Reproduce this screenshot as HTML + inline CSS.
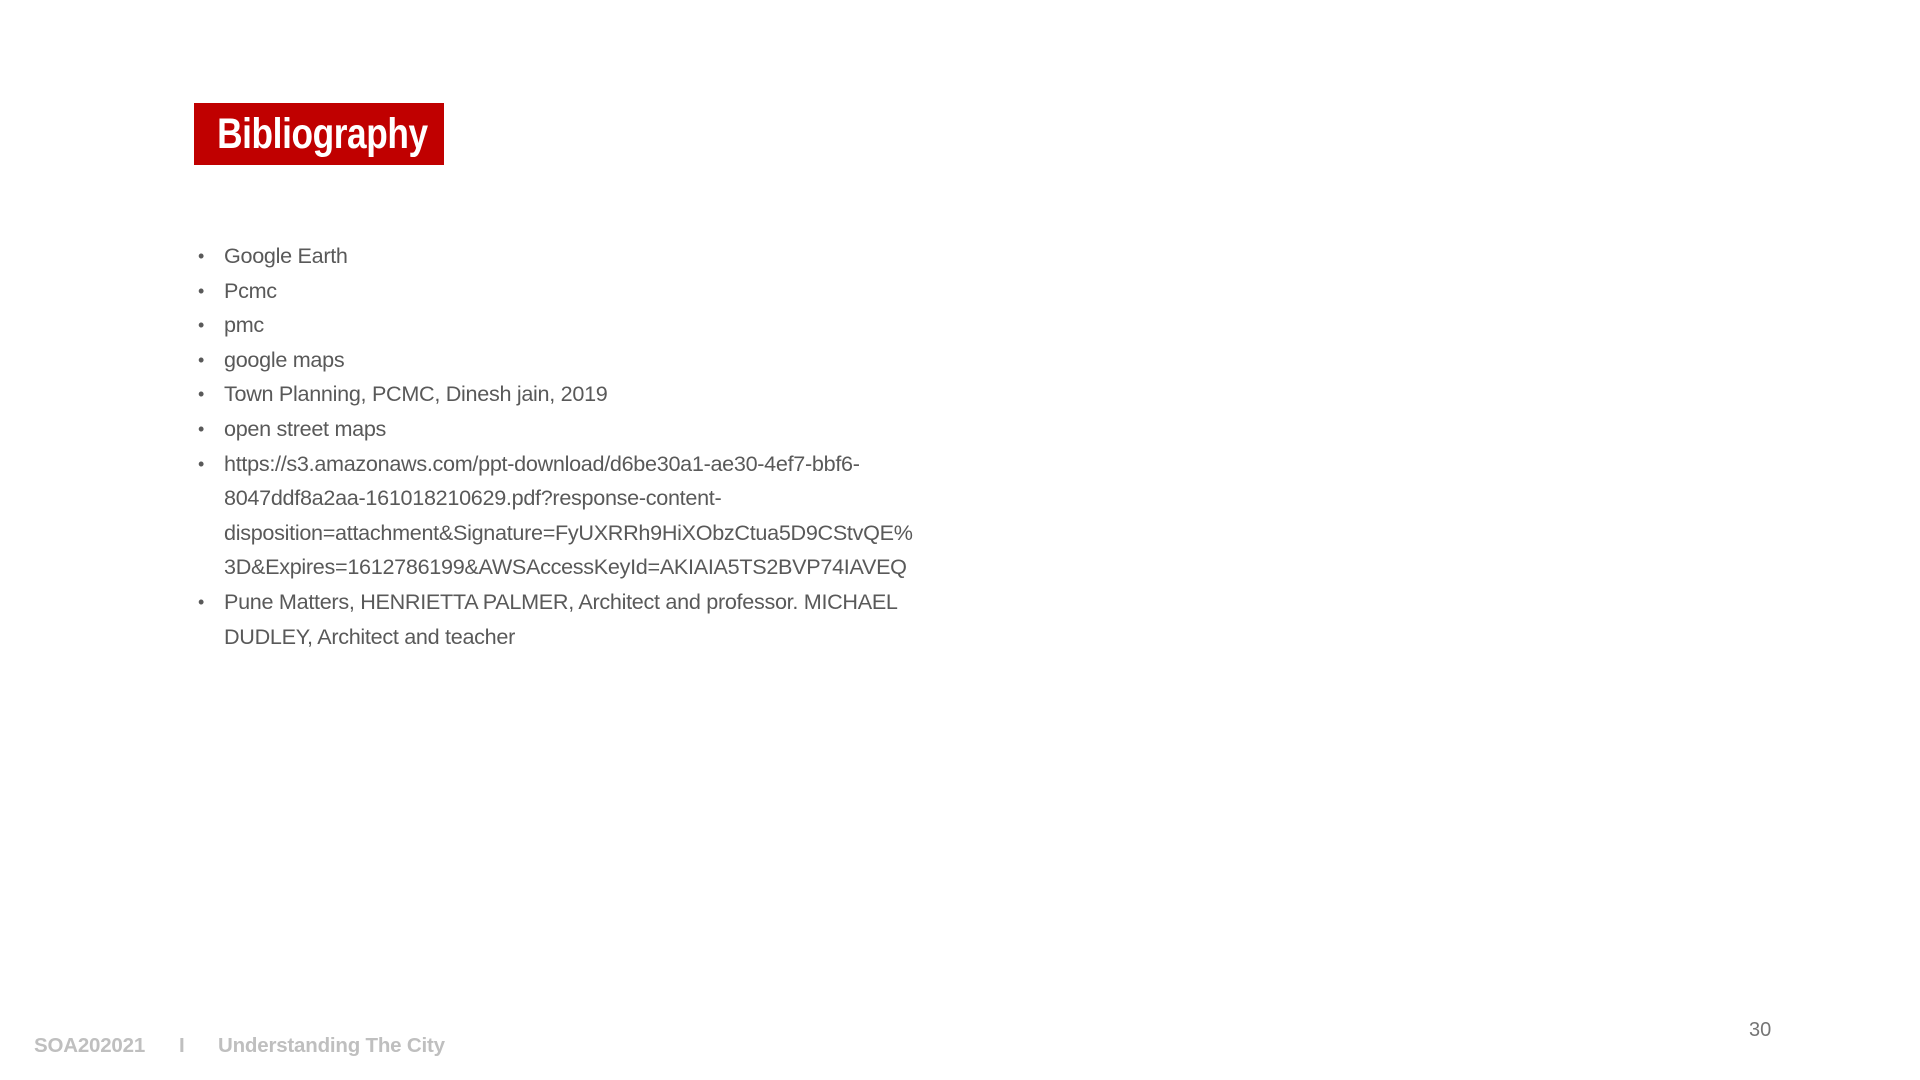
<!DOCTYPE html>
<html><head><meta charset="utf-8"><style>
body{margin:0;width:1920px;height:1080px;background:#fff;position:relative;overflow:hidden;font-family:"Liberation Sans",sans-serif}
.title{position:absolute;left:194px;top:103px;width:250px;height:62px;background:#c00000;color:#fff;font-weight:bold;font-size:43px;line-height:62px;text-align:center}
.title span{display:inline-block;transform:scaleX(0.82);transform-origin:center;letter-spacing:-0.5px}
.list{position:absolute;left:0;top:239px;color:#595959;font-size:21.6px;letter-spacing:-0.3px}
.l{position:absolute;left:224px;white-space:nowrap;height:34px;line-height:34px}
.b{position:absolute;left:-26px;font-size:18px}
.foot{position:absolute;top:1034px;left:34px;color:#bfbfbf;font-weight:bold;font-size:20.5px;white-space:nowrap;letter-spacing:-0.2px}
.pg{position:absolute;left:1749px;top:1019px;color:#757575;font-size:20px}
</style></head><body>
<div class="title"><span>Bibliography</span></div>
<div class="list">
<div class="l" style="top:0"><span class="b">•</span>Google Earth</div>
<div class="l" style="top:34.6px"><span class="b">•</span>Pcmc</div>
<div class="l" style="top:69.2px"><span class="b">•</span>pmc</div>
<div class="l" style="top:103.8px"><span class="b">•</span>google maps</div>
<div class="l" style="top:138.4px"><span class="b">•</span>Town Planning, PCMC, Dinesh jain, 2019</div>
<div class="l" style="top:173px"><span class="b">•</span>open street maps</div>
<div class="l" style="top:207.6px"><span class="b">•</span>https://s3.amazonaws.com/ppt-download/d6be30a1-ae30-4ef7-bbf6-</div>
<div class="l" style="top:242.2px">8047ddf8a2aa-161018210629.pdf?response-content-</div>
<div class="l" style="top:276.8px">disposition=attachment&amp;Signature=FyUXRRh9HiXObzCtua5D9CStvQE%</div>
<div class="l" style="top:311.4px">3D&amp;Expires=1612786199&amp;AWSAccessKeyId=AKIAIA5TS2BVP74IAVEQ</div>
<div class="l" style="top:346px"><span class="b">•</span>Pune Matters, HENRIETTA PALMER, Architect and professor. MICHAEL</div>
<div class="l" style="top:380.6px">DUDLEY, Architect and teacher</div>
</div>
<div class="foot">SOA202021<span style="position:absolute;left:145px">I</span><span style="position:absolute;left:184px">Understanding The City</span></div>
<div class="pg">30</div>
</body></html>
